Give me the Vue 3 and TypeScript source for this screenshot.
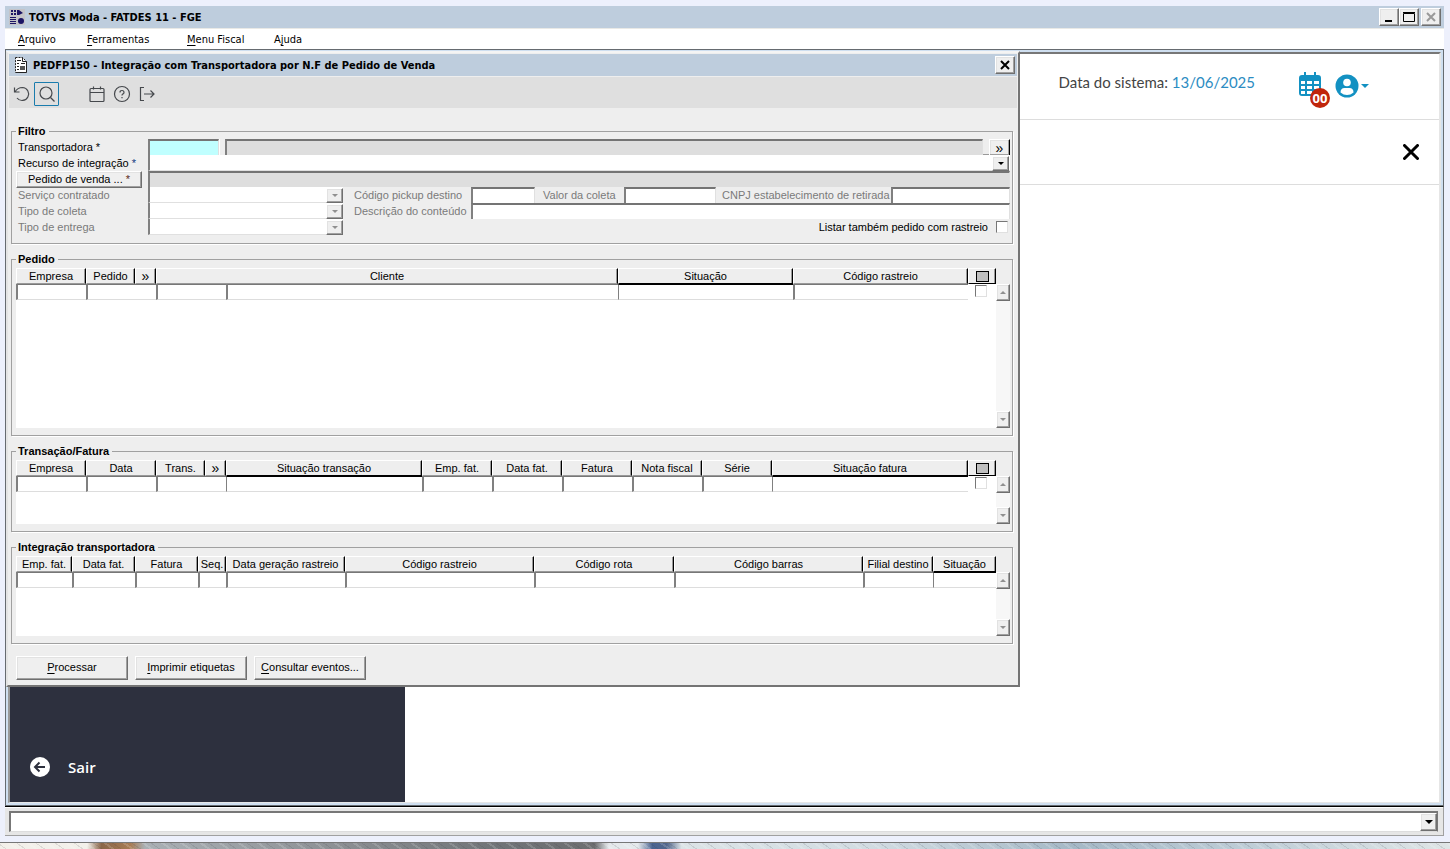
<script setup lang="ts">
import { ref } from 'vue'

interface Head {
  label: string
  span?: number
  sortable?: boolean
  kind?: 'jump' | 'mark'
}
interface Cell {
  name: string
  span?: number
  sortable?: boolean
  check?: boolean
}
interface Grid {
  title: string
  size: string
  widths: number[]
  heads: Head[]
  cells: Cell[]
}

const menus = [
  { key: 'A', before: '', after: 'rquivo' },
  { key: 'F', before: '', after: 'erramentas' },
  { key: 'M', before: '', after: 'enu Fiscal' },
  { key: 'j', before: 'A', after: 'uda' },
]

const actions = [
  { key: 'P', rest: 'rocessar' },
  { key: 'I', rest: 'mprimir etiquetas' },
  { key: 'C', rest: 'onsultar eventos...' },
]

// A width of 0 lets the column take the remaining space.
const grids: Grid[] = [
  {
    title: 'Pedido',
    size: 'tall',
    widths: [70, 49, 21, 70, 0, 175, 175, 28],
    heads: [
      { label: 'Empresa' },
      { label: 'Pedido' },
      { label: '»', kind: 'jump' },
      { label: 'Cliente', span: 2 },
      { label: 'Situação', sortable: true },
      { label: 'Código rastreio' },
      { label: '', kind: 'mark' },
    ],
    cells: [
      { name: 'Empresa' },
      { name: 'Pedido', span: 2 },
      { name: 'Código do cliente' },
      { name: 'Cliente' },
      { name: 'Situação', sortable: true },
      { name: 'Código rastreio' },
      { name: 'Selecionar', check: true },
    ],
  },
  {
    title: 'Transação/Fatura',
    size: 'short',
    widths: [70, 70, 49, 21, 0, 70, 70, 70, 70, 70, 196, 28],
    heads: [
      { label: 'Empresa' },
      { label: 'Data' },
      { label: 'Trans.' },
      { label: '»', kind: 'jump' },
      { label: 'Situação transação', sortable: true },
      { label: 'Emp. fat.' },
      { label: 'Data fat.' },
      { label: 'Fatura' },
      { label: 'Nota fiscal' },
      { label: 'Série' },
      { label: 'Situação fatura', sortable: true },
      { label: '', kind: 'mark' },
    ],
    cells: [
      { name: 'Empresa' },
      { name: 'Data' },
      { name: 'Transação', span: 2 },
      { name: 'Situação transação', sortable: true },
      { name: 'Empresa fatura' },
      { name: 'Data fatura' },
      { name: 'Fatura' },
      { name: 'Nota fiscal' },
      { name: 'Série' },
      { name: 'Situação fatura', sortable: true },
      { name: 'Selecionar', check: true },
    ],
  },
  {
    title: 'Integração transportadora',
    size: 'medium',
    widths: [56, 63, 63, 28, 119, 189, 140, 0, 70, 63],
    heads: [
      { label: 'Emp. fat.' },
      { label: 'Data fat.' },
      { label: 'Fatura' },
      { label: 'Seq.' },
      { label: 'Data geração rastreio' },
      { label: 'Código rastreio' },
      { label: 'Código rota' },
      { label: 'Código barras' },
      { label: 'Filial destino' },
      { label: 'Situação', sortable: true },
    ],
    cells: [
      { name: 'Empresa fatura' },
      { name: 'Data fatura' },
      { name: 'Fatura' },
      { name: 'Sequência' },
      { name: 'Data geração rastreio' },
      { name: 'Código rastreio' },
      { name: 'Código rota' },
      { name: 'Código barras' },
      { name: 'Filial destino' },
      { name: 'Situação', sortable: true },
    ],
  },
]

const carrier = ref('')
</script>

<template>
  <div class="desktop">
    <div class="app">
      <header class="titlebar">
        <svg class="app-icon" viewBox="0 0 16 16" aria-hidden="true">
          <rect width="16" height="16" fill="#c4c4c8" />
          <g fill="#1b1464">
            <path d="M2 1h2v2H2zM5 1h2v2H5zM2 4h2v2H2zM5 4h2v2H5zM8 1h2v5H8zM10 1l4 3-4 2zM1 8h6v1H1zM1 10h6v1H1zM1 12h6v1H1zM1 14h6v1H1z" />
            <circle cx="12" cy="12" r="3" />
          </g>
        </svg>
        <h1>TOTVS Moda - FATDES 11 - FGE</h1>
        <div class="win-buttons">
          <button class="raised win" aria-label="Minimizar"><svg viewBox="0 0 14 14"><path d="M3 11h7" stroke="#000" stroke-width="2" /></svg></button>
          <button class="raised win" aria-label="Maximizar"><svg viewBox="0 0 14 14"><path d="M1.500 3.500h11v8h-11zM1 2.500h12" fill="none" stroke="#000" /></svg></button>
          <button class="raised win apart" aria-label="Fechar" disabled><svg viewBox="0 0 14 14"><path d="M3 3l8 8M11 3l-8 8" stroke="#999" stroke-width="2" /></svg></button>
        </div>
      </header>
      <nav class="menubar">
        <button v-for="m in menus" :key="m.key">{{ m.before }}<u>{{ m.key }}</u>{{ m.after }}</button>
      </nav>

      <main class="mdi">
        <div class="page">
          <aside class="sidebar">
            <a class="exit" href="#">
              <svg viewBox="0 0 20 20" aria-hidden="true">
                <circle cx="10" cy="10" r="10" fill="#fff" />
                <path d="M15 10H5.500M9.500 5.500L5 10l4.500 4.500" fill="none" stroke="#2d303e" stroke-width="2" />
              </svg>
              Sair
            </a>
          </aside>
          <section class="content">
            <div class="page-top">
              <p>Data do sistema: <span>13/06/2025</span></p>
              <button class="calendar" aria-label="Calendário">
                <svg viewBox="0 0 22 24">
                  <path d="M5 0h2v3h8V0h2v3h2q3 0 3 3v15q0 3-3 3H3q-3 0-3-3V6q0-3 3-3h2z" fill="#1391c2" />
                  <path d="M2 9h4v3H2zM8 9h5v3H8zM15 9h5v3h-5zM2 14h4v3H2zM8 14h5v3H8zM15 14h5v3h-5zM2 19h4v3H2zM8 19h5v3H8zM15 19h5v3h-5z" fill="#fff" />
                </svg>
                <span class="badge">00</span>
              </button>
              <button class="user" aria-label="Usuário">
                <svg viewBox="0 0 34 24">
                  <circle cx="12" cy="12" r="11.500" fill="#1391c2" />
                  <circle cx="12" cy="8.500" r="3.800" fill="#fff" />
                  <path d="M5.500 18.500q0-4.500 4-4.500h5q4 0 4 4.500Q15.500 21 12 21t-6.500-2.500z" fill="#fff" />
                  <path d="M26 10h8l-4 4z" fill="#1391c2" />
                </svg>
              </button>
            </div>
            <div class="page-sub">
              <button aria-label="Fechar página"><svg viewBox="0 0 16 16"><path d="M1.500 1.500l13 13M14.500 1.500l-13 13" stroke="#000" stroke-width="3" stroke-linecap="round" /></svg></button>
            </div>
          </section>
        </div>

        <section class="child">
          <header class="titlebar inner">
            <svg class="app-icon" viewBox="0 0 16 16" aria-hidden="true">
              <path d="M2.500.500h7l4 4v11h-11z" fill="#fff" stroke="#222" stroke-dasharray="2 1" />
              <path d="M9.500.500v4h4M13.500 5v10.500h-10" fill="none" stroke="#222" />
              <path d="M4 3.500h4M4 6.500h2M8 6.500h4M4 9.500h2M4 12.500h2" stroke="#222" />
              <path d="M7 9h5v4H7z" fill="#555" />
            </svg>
            <h2>PEDFP150 - Integração com Transportadora por N.F de Pedido de Venda</h2>
            <button class="raised win" aria-label="Fechar janela"><svg viewBox="0 0 14 14"><path d="M3 3l8 8M11 3l-8 8" stroke="#000" stroke-width="2" /></svg></button>
          </header>

          <div class="toolbar">
            <button aria-label="Desfazer"><svg viewBox="0 0 18 18"><path d="M1.500 2.500v4.500h5M2 7Q4.500 2.500 9.500 2.500a6.500 6.500 0 1 1-5.500 10.500" /></svg></button>
            <button class="active" aria-label="Pesquisar"><svg viewBox="0 0 18 18"><circle cx="8" cy="8" r="6" /><path d="M12.500 12.500l4 4" /></svg></button>
            <button class="spaced" aria-label="Agenda"><svg viewBox="0 0 18 18"><path d="M3 3.500h12q1 0 1 1v11q0 1-1 1H3q-1 0-1-1v-11q0-1 1-1zM2 7.500h14M5.500 1.500v3M12.500 1.500v3" /></svg></button>
            <button aria-label="Ajuda"><svg viewBox="0 0 18 18"><circle cx="9" cy="9" r="7.500" /><path d="M7 7.500Q7 5.500 9 5.500t2 2Q11 8.800 9.500 9.200 9 9.500 9 10.500M9 12v1.200" /></svg></button>
            <button aria-label="Sair da tela"><svg viewBox="0 0 18 18"><path d="M6 2.500H2.500v13H6M6 9h10M12.500 5.500L16 9l-3.500 3.500" /></svg></button>
          </div>

          <form class="body" @submit.prevent>
            <fieldset class="filter">
              <legend>Filtro</legend>
              <div class="row">
                <label class="lead" for="carrier">Transportadora <i>*</i></label>
                <input id="carrier" v-model="carrier" class="sunk key" type="text">
                <button class="tiny" type="button" aria-label="Abrir consulta"></button>
                <input class="sunk grey grow" type="text" readonly aria-label="Nome da transportadora">
                <span class="slot"></span>
                <button class="raised more" type="button" aria-label="Mais transportadoras">»</button>
              </div>
              <div class="row">
                <label class="lead" for="resource">Recurso de integração <i class="blue">*</i></label>
                <span class="combo grow"><select id="resource"><option></option></select><span class="raised arrow"></span></span>
              </div>
              <div class="row">
                <span class="lead"><button class="raised order" type="button">Pedido de venda ... <i class="req">*</i></button></span>
                <input class="sunk grey grow" type="text" readonly aria-label="Pedidos de venda">
              </div>
              <div class="row off">
                <label class="lead" for="service">Serviço contratado</label>
                <span class="combo fixed"><select id="service" disabled><option></option></select><span class="raised arrow"></span></span>
                <label class="mid" for="pickup">Código pickup destino</label>
                <input id="pickup" class="sunk w64" type="text" disabled>
                <label class="value" for="value">Valor da coleta</label>
                <input id="value" class="sunk w92" type="text" disabled>
                <label class="cnpj" for="cnpj">CNPJ estabelecimento de retirada</label>
                <input id="cnpj" class="sunk grow" type="text" disabled>
              </div>
              <div class="row off">
                <label class="lead" for="collect">Tipo de coleta</label>
                <span class="combo fixed"><select id="collect" disabled><option></option></select><span class="raised arrow"></span></span>
                <label class="mid" for="desc">Descrição do conteúdo</label>
                <input id="desc" class="sunk grow" type="text" disabled>
              </div>
              <div class="row off">
                <label class="lead" for="delivery">Tipo de entrega</label>
                <span class="combo fixed"><select id="delivery" disabled><option></option></select><span class="raised arrow"></span></span>
                <label class="tracked">Listar também pedido com rastreio <input class="tick" type="checkbox"></label>
              </div>
            </fieldset>

            <fieldset v-for="g in grids" :key="g.title">
              <legend>{{ g.title }}</legend>
              <div class="grid" :class="g.size">
                <div class="sheet">
                  <table>
                    <colgroup>
                      <col v-for="(w, i) in g.widths" :key="i" :style="{ width: w ? w + 'px' : 'auto' }">
                    </colgroup>
                    <thead>
                      <tr>
                        <th v-for="(h, i) in g.heads" :key="i" :colspan="h.span || 1" :class="[h.kind, { sortable: h.sortable }]">
                          <button v-if="h.kind === 'mark'" type="button" aria-label="Marcar todos"></button>
                          <button v-else-if="h.kind === 'jump'" type="button" aria-label="Mais">{{ h.label }}</button>
                          <template v-else>{{ h.label }}</template>
                        </th>
                      </tr>
                    </thead>
                    <tbody>
                      <tr>
                        <td v-for="c in g.cells" :key="c.name" :colspan="c.span || 1" :class="{ sortable: c.sortable, check: c.check }">
                          <input v-if="c.check" class="tick" type="checkbox" :aria-label="c.name">
                          <input v-else class="cell" type="text" :aria-label="c.name">
                        </td>
                      </tr>
                    </tbody>
                  </table>
                </div>
                <div class="scroll">
                  <button class="raised up" type="button" aria-label="Rolar para cima"></button>
                  <button class="raised down" type="button" aria-label="Rolar para baixo"></button>
                </div>
              </div>
            </fieldset>

            <div class="actions">
              <button v-for="a in actions" :key="a.key" class="raised" type="button"><u>{{ a.key }}</u>{{ a.rest }}</button>
            </div>
          </form>
        </section>
      </main>

      <footer class="status">
        <span class="combo"><select aria-label="Mensagens"><option></option></select><span class="raised arrow"></span></span>
      </footer>
    </div>
    <div class="wallpaper"></div>
  </div>
</template>

<style>
html,
body {
  margin: 0;
  background: #edf0fc;
}
</style>

<style scoped>
* {
  box-sizing: border-box;
}
.desktop {
  display: flex;
  flex-direction: column;
  min-height: 100vh;
  font: 11px/16px "Liberation Sans", Arial, sans-serif;
  color: #000;
}
button,
input,
select {
  margin: 0;
  padding: 0;
  border: 0;
  border-radius: 0;
  background: none;
  color: inherit;
  font: inherit;
  appearance: none;
}
svg {
  display: block;
}
i {
  font-style: normal;
}
.app {
  flex: 1;
  display: flex;
  flex-direction: column;
  margin: 6px 6px 6px 5px;
}

.titlebar {
  display: flex;
  align-items: center;
  height: 22px;
  padding: 0 3px 0 4px;
  background: #becddd;
}
.titlebar h1,
.titlebar h2 {
  flex: 1;
  margin: 0 0 0 4px;
  font: bold 11px/18px "DejaVu Sans Condensed", "DejaVu Sans", sans-serif;
  padding-top: 1px;
}
.app-icon {
  width: 16px;
  height: 16px;
}
.win-buttons {
  display: flex;
}
.raised {
  background: #efefef;
  border: 1px solid;
  border-color: #fff #6f6f6f #6f6f6f #fff;
  box-shadow: inset -1px -1px 0 #a0a0a0, inset 1px 1px 0 #e2e2e2;
}
.win {
  display: flex;
  align-items: center;
  justify-content: center;
  width: 20px;
  height: 18px;
}
.win svg {
  width: 14px;
  height: 14px;
}
.apart {
  margin-left: 2px;
}

.menubar {
  display: grid;
  grid-template-columns: 69px 100px 87px max-content;
  height: 21px;
  padding: 1px 13px 0;
  background: #fff;
  border-top: 1px solid #e9e9e6;
  font: 11px/20px "DejaVu Sans Condensed", "DejaVu Sans", sans-serif;
}
.menubar button {
  text-align: left;
}
u {
  text-decoration: underline;
  text-underline-offset: 2px;
}

.mdi {
  position: relative;
  flex: 1;
  display: flex;
  min-height: 640px;
  padding: 2px;
  border: 1px solid #666b70;
  background: #cfdff0;
}
.page {
  flex: 1;
  display: flex;
  border: 2px solid;
  border-color: #777 #e6e6e6 #e6e6e6 #999;
  border-bottom-width: 1px;
  background: #fff;
}
.sidebar {
  display: flex;
  align-items: flex-end;
  width: 395px;
  background: #2d303e;
}
.exit {
  display: flex;
  align-items: center;
  gap: 18px;
  padding: 0 0 25px 20px;
  color: #fff;
  font: 600 15px/20px "Open Sans", sans-serif;
  text-decoration: none;
}
.exit svg {
  width: 20px;
  height: 20px;
}
.content {
  flex: 1;
}
.page-top {
  display: flex;
  align-items: center;
  justify-content: flex-end;
  height: 66px;
  padding: 0 70px 6px 0;
  border-bottom: 1px solid #ddd;
}
.page-top p {
  margin: 0 0 3px;
  color: #444;
  font: 15px/24px Lato, sans-serif;
}
.page-top p span {
  color: #2c8cc2;
}
.calendar {
  position: relative;
  width: 22px;
  height: 24px;
  margin: 0 14px 0 44px;
}
.calendar svg {
  width: 22px;
  height: 24px;
}
.badge {
  position: absolute;
  top: 16px;
  left: 11px;
  width: 20px;
  height: 20px;
  border-radius: 50%;
  background: #c0260c;
  color: #fff;
  font: bold 13px/20px "Open Sans", sans-serif;
  text-align: center;
}
.user {
  margin-top: 4px;
}
.user svg {
  width: 34px;
  height: 24px;
}
.page-sub {
  display: flex;
  align-items: center;
  justify-content: flex-end;
  height: 65px;
  padding-right: 20px;
  border-bottom: 1px solid #ddd;
}
.page-sub svg {
  width: 16px;
  height: 16px;
}

.child {
  position: absolute;
  top: 1px;
  left: 0;
  width: calc(70vw - 1px);
  min-width: 1014px;
  padding: 1px;
  border: 2px solid;
  border-color: #f4f4f4 #747474 #747474 #e4e4e4;
  background: #eee;
}
.titlebar.inner {
  padding: 0 2px 0 4px;
}
.toolbar {
  display: flex;
  align-items: center;
  height: 32px;
  padding-top: 3px;
  border-top: 1px solid #eee;
  background: #dfdfdf;
}
.toolbar button {
  display: flex;
  align-items: center;
  justify-content: center;
  width: 25px;
  height: 24px;
}
.toolbar .active {
  border: 1px solid #1a7cad;
  border-radius: 1px;
}
.toolbar .spaced {
  margin-left: 25px;
}
.toolbar svg {
  width: 18px;
  height: 18px;
  fill: none;
  stroke: #45484c;
  stroke-width: 1.200;
}

.body {
  padding: 15px 4px 4px 2px;
}
fieldset {
  min-width: 0;
  margin: 7px 0 0;
  padding: 1px 2px 7px 4px;
  border: 1px solid #a0a0a0;
  box-shadow: 1px 1px 0 #fff;
}
.filter {
  margin-top: 0;
  padding: 0 2px 8px 4px;
}
legend {
  height: 16px;
  padding: 0 3px 0 2px;
  font-weight: bold;
}

.row {
  display: flex;
  height: 16px;
  white-space: nowrap;
}
.off {
  color: #7a7a7a;
}
.lead {
  width: 132px;
  padding-left: 2px;
}
.lead .order {
  display: block;
  width: 126px;
  height: 17px;
  margin-left: -2px;
  line-height: 15px;
}
.blue {
  color: #123a80;
}
.req {
  color: #5a2a20;
}
.sunk {
  min-width: 0;
  height: 16px;
  padding: 0 2px;
  border: solid;
  border-width: 2px 1px 0 2px;
  border-color: #747474 #e0e0e0 #e0e0e0 #808080;
  background: #fff;
}
.grow {
  flex: 1;
}
.sunk.grey {
  background: #dedede;
}
.sunk.key {
  width: 71px;
  background: #c0ffff;
}
.tiny {
  width: 6px;
  height: 17px;
  border-bottom: 1px solid #777;
  border-left: 1px solid #fff;
}
.slot {
  width: 6px;
  border-bottom: 1px solid #999;
}
.more {
  width: 21px;
  height: 17px;
  border-right-color: #000;
  border-bottom-color: #000;
  font-size: 14px;
  line-height: 12px;
}
.combo {
  display: flex;
  height: 16px;
  padding-top: 1px;
  border-left: 2px solid #808080;
  border-bottom: 1px solid #e0e0e0;
  background: #fff;
}
.combo select {
  flex: 1;
  min-width: 0;
}
.combo.fixed {
  width: 195px;
}
.arrow {
  display: flex;
  align-items: center;
  justify-content: center;
  width: 17px;
  height: 15px;
  margin-right: 1px;
  pointer-events: none;
}
.fixed .arrow {
  margin-right: 0;
}
.arrow::after,
.up::after,
.down::after {
  content: "";
  border: solid transparent;
  border-width: 3px 3px 0;
  border-top-color: #000;
}
.off .arrow::after,
.down::after {
  border-top-color: #909090;
}
.up::after {
  border-width: 0 3px 3px;
  border-bottom-color: #909090;
}
.mid {
  width: 128px;
  padding-left: 11px;
}
.w64 {
  width: 64px;
}
.value {
  width: 89px;
  padding-left: 8px;
}
.w92 {
  width: 92px;
}
.cnpj {
  width: 175px;
  padding-left: 6px;
}
.tracked {
  display: flex;
  align-items: center;
  gap: 8px;
  margin-left: auto;
  padding-right: 2px;
  color: #000;
}
.tick {
  width: 12px;
  height: 12px;
  border: 1px solid;
  border-color: #777 #e0e0e0 #e0e0e0 #777;
  background: #fff;
}

.grid {
  display: flex;
}
.tall {
  min-height: 160px;
}
.short {
  min-height: 64px;
}
.medium {
  min-height: 80px;
}
.sheet {
  flex: 1;
  background: #fff;
}
table {
  width: 100%;
  table-layout: fixed;
  border-collapse: separate;
  border-spacing: 0;
}
th {
  height: 16px;
  padding: 0;
  border: 1px solid;
  border-color: #fff #000 #999 #fff;
  background: #eee;
  box-shadow: inset -1px 0 0 #999;
  font-weight: normal;
  line-height: 14px;
  white-space: nowrap;
}
th.sortable,
th.mark {
  border-bottom-color: #000;
}
td {
  height: 16px;
  padding: 0;
  border: solid;
  border-width: 1px 0 1px 2px;
  border-color: #777 #ddd #ddd #808080;
  line-height: 14px;
}
td.sortable {
  border-top-color: #000;
  border-left-width: 1px;
}
td.check {
  border: 0;
}
td .tick {
  display: block;
  margin: 1px 0 3px 7px;
}
.cell {
  display: block;
  width: 100%;
  height: 14px;
}
.jump button {
  display: block;
  width: 100%;
  height: 14px;
  font-size: 14px;
  line-height: 12px;
}
.mark button {
  display: block;
  width: 13px;
  height: 11px;
  margin: 0 auto;
  border: 1px solid #000;
  background: #c0c0c0;
}
.scroll {
  display: flex;
  flex-direction: column;
  justify-content: space-between;
  width: 14px;
  margin-top: 16px;
  background: #f7f7f7;
}
.scroll button {
  display: flex;
  align-items: center;
  justify-content: center;
  width: 14px;
  height: 17px;
}
.actions {
  display: flex;
  gap: 7px;
  margin: 12px 0 0 5px;
}
.actions button {
  width: 112px;
  height: 24px;
  padding-bottom: 2px;
}

.status {
  padding: 4px 5px 3px 4px;
  border: solid;
  border-width: 1px 1px 1px 0;
  border-color: #000 #a0a0a0 #a0a0a0;
  background: #e6e6e6;
  box-shadow: inset 0 1px 0 #fff;
}
.status .combo {
  height: 21px;
  padding: 0;
  border: solid;
  border-width: 2px 1px 1px 2px;
  border-color: #777 #777 #ddd #777;
}
.status .arrow {
  width: 17px;
  height: 18px;
  margin: 0;
}
.status .arrow::after {
  border-width: 4px 4px 0;
}
.wallpaper {
  height: 7px;
  border-top: 1px solid #777;
  background:
    repeating-linear-gradient(35deg, transparent 0 3px, rgba(50, 50, 60, 0.12) 3px 4px, transparent 4px 9px, rgba(255, 255, 255, 0.15) 9px 11px),
    linear-gradient(90deg, #f3f0ea 6%, #8a6548 7%, #a87c55 9%, #aab0b5 10%, #8b8e92 24%, #707478 34%, #6d6e70 41%, #e5e9ec 42%, #e5e9ec 44%, #4a6390 45%, #53678c 46%, #dce3e6 47%, #d2dce2 60%, #a5b8c6 74%, #bccbd5 85%, #dfe5e6 100%);
}
</style>
